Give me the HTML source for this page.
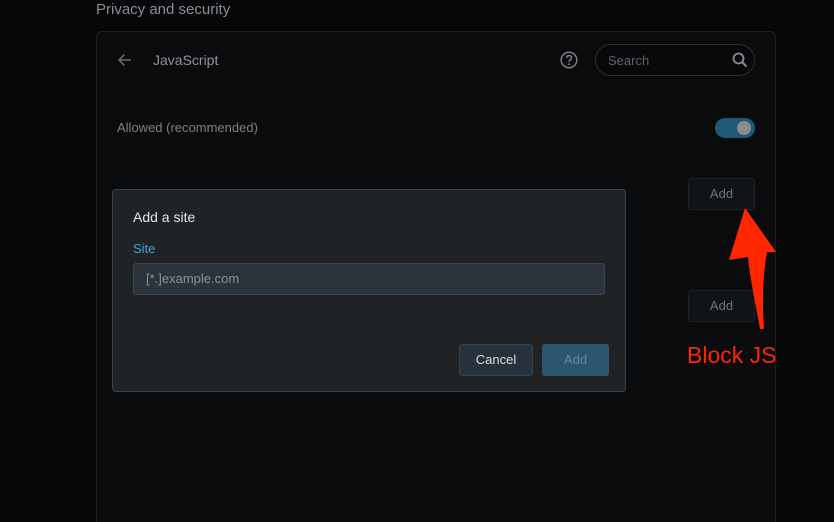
<!DOCTYPE html>
<html><head><meta charset="utf-8"><style>
*{box-sizing:border-box;margin:0;padding:0}
html{width:834px;height:522px;overflow:hidden;background:#060708}
body{width:834px;height:522px;background:#060708;font-family:"Liberation Sans",sans-serif;position:relative;overflow:hidden}
.a{position:absolute}
.card{left:96px;top:31px;width:680px;height:500px;background:#0a0b0d;border:1px solid #1e2124;border-radius:6px}
.btn{border:1px solid #1e2226;background:#111417;border-radius:3px;color:#6e7378;font-size:13px;text-align:center}
</style></head><body>
<div class="a" style="left:96px;top:1px;color:#8a8e92;font-size:15px">Privacy and security</div>
<div class="a card"></div>
<svg class="a" style="left:117px;top:52px" width="16" height="16" viewBox="0 0 16 16"><path d="M14 8H2M7.5 2.5L2 8l5.5 5.5" stroke="#6b6f73" stroke-width="1.5" fill="none"/></svg>
<div class="a" style="left:153px;top:52px;color:#8f9398;font-size:14px">JavaScript</div>
<svg class="a" style="left:560px;top:51px" width="18" height="18" viewBox="0 0 18 18"><circle cx="9" cy="9" r="7.8" stroke="#7c8085" stroke-width="1.5" fill="none"/><path d="M6.6 7a2.4 2.4 0 1 1 3.4 2.1c-.7.4-1 .8-1 1.6" stroke="#7c8085" stroke-width="1.5" fill="none"/><circle cx="9" cy="13.2" r=".9" fill="#7c8085"/></svg>
<div class="a" style="left:595px;top:44px;width:160px;height:32px;border:1px solid #2a2d31;border-radius:16px;background:#08090b"></div>
<div class="a" style="left:608px;top:53px;color:#5f6368;font-size:13px">Search</div>
<svg class="a" style="left:732px;top:52px" width="16" height="16" viewBox="0 0 16 16"><circle cx="6.5" cy="6.5" r="5" stroke="#8a8e92" stroke-width="1.8" fill="none"/><path d="M10.2 10.2L14.5 14.5" stroke="#8a8e92" stroke-width="2"/></svg>
<div class="a" style="left:117px;top:120px;color:#7d8185;font-size:13px">Allowed (recommended)</div>
<div class="a" style="left:715px;top:118px;width:40px;height:20px;border-radius:10px;background:#1f5a75"></div>
<div class="a" style="left:737px;top:121px;width:14px;height:14px;border-radius:50%;background:#8b8b8b"></div>
<div class="a btn" style="left:688px;top:178px;width:67px;height:32px;line-height:30px">Add</div>
<div class="a btn" style="left:688px;top:290px;width:67px;height:32px;line-height:30px">Add</div>
<div class="a" style="left:112px;top:189px;width:514px;height:203px;background:#202326;border:1px solid #3a424b;border-radius:4px"></div>
<div class="a" style="left:133px;top:209px;color:#e6e6e6;font-size:14px">Add a site</div>
<div class="a" style="left:133px;top:241px;color:#3fa3d8;font-size:13px">Site</div>
<div class="a" style="left:133px;top:263px;width:472px;height:32px;background:#2b333c;border:1px solid #3d4650;border-radius:3px"></div>
<div class="a" style="left:146px;top:271px;color:#8c9196;font-size:13px">[*.]example.com</div>
<div class="a" style="left:459px;top:344px;width:74px;height:32px;background:#27313b;border:1px solid #3a434d;border-radius:3px;color:#dcdcdc;font-size:13px;text-align:center;line-height:30px">Cancel</div>
<div class="a" style="left:542px;top:344px;width:67px;height:32px;background:#2c5670;border-radius:3px;color:#6e8596;font-size:13px;text-align:center;line-height:32px">Add</div>
<svg class="a" style="left:0;top:0" width="834" height="522"><path d="M745 208L776 252L767 252C763 275 762 300 764 329L760 329C756 305 750 280 748 257L729 260Z" fill="#ff2600"/></svg>
<div class="a" style="left:687px;top:342px;color:#ff2600;font-size:23px">Block JS</div>
</body></html>
